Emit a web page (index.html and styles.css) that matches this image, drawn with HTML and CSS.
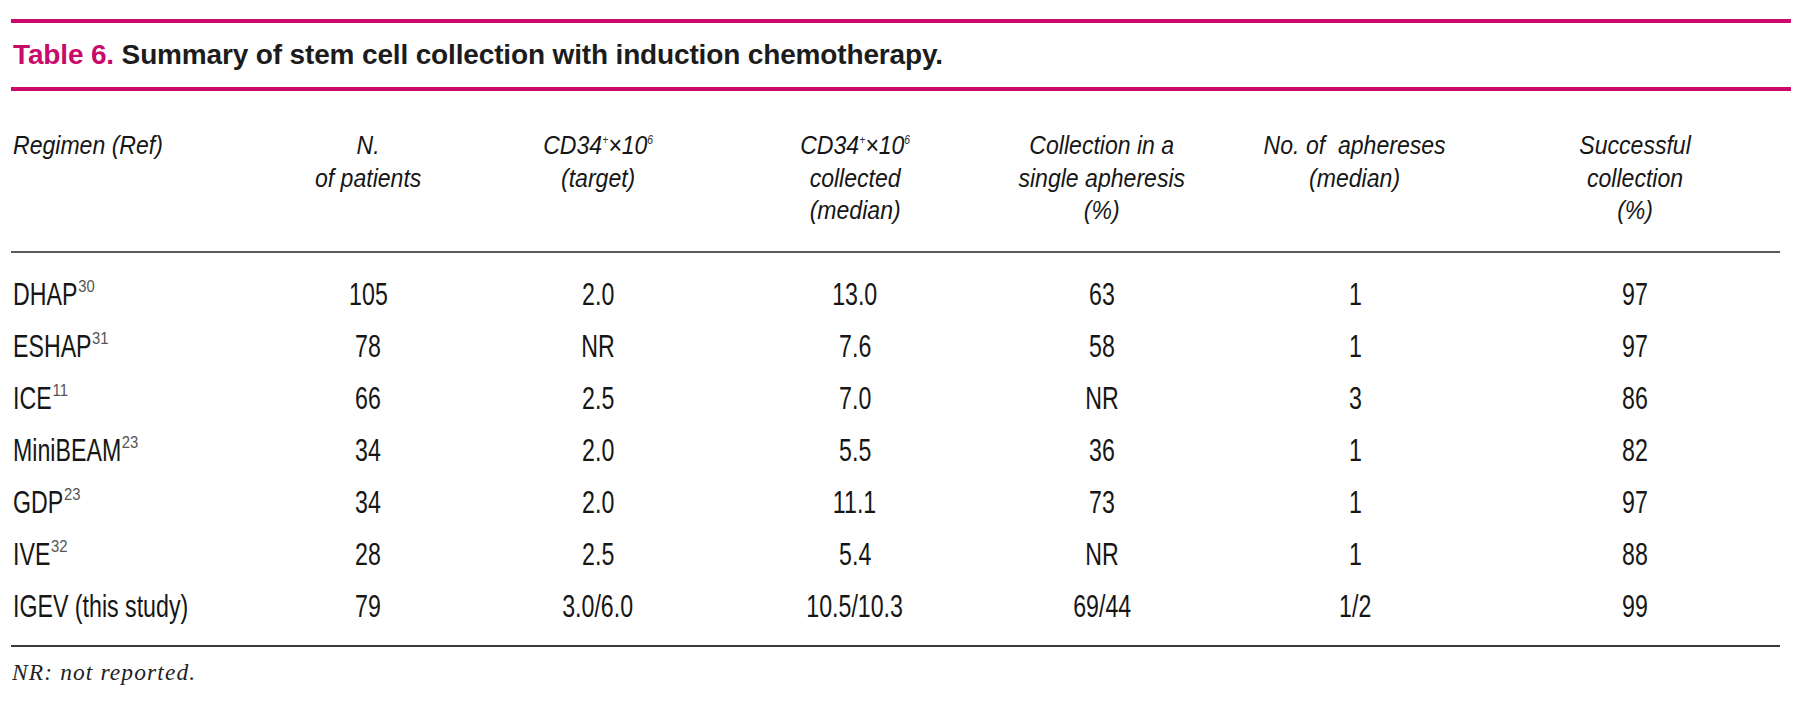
FILE: index.html
```html
<!DOCTYPE html>
<html lang="en">
<head>
<meta charset="utf-8">
<title>Table 6</title>
<link rel="stylesheet" href="styles.css">
</head>
<body>
<div class="page">
  <div class="rule"></div>
  <div class="caption"><span class="label">Table 6.</span> Summary of stem cell collection with induction chemotherapy.</div>
  <div class="rule"></div>
  <table class="data">
    <colgroup>
      <col class="c1"><col class="c2"><col class="c3"><col class="c4"><col class="c5"><col class="c6"><col class="c7"><col>
    </colgroup>
    <thead>
      <tr>
        <th class="left"><span class="t">Regimen (Ref)</span></th>
        <th><span class="t">N.<br>of patients</span></th>
        <th><span class="t">CD34<sup>+</sup>×10<sup>6</sup><br>(target)</span></th>
        <th><span class="t">CD34<sup>+</sup>×10<sup>6</sup><br>collected<br>(median)</span></th>
        <th><span class="t">Collection in a<br>single apheresis<br>(%)</span></th>
        <th><span class="t">No. of &nbsp;aphereses<br>(median)</span></th>
        <th><span class="t">Successful<br>collection<br>(%)</span></th>
        <th></th>
      </tr>
    </thead>
    <tbody>
      <tr class="first"><td class="left"><span class="t">DHAP<sup>30</sup></span></td><td><span class="t">105</span></td><td><span class="t">2.0</span></td><td><span class="t">13.0</span></td><td><span class="t">63</span></td><td><span class="t">1</span></td><td><span class="t">97</span></td><td></td></tr>
      <tr><td class="left"><span class="t">ESHAP<sup>31</sup></span></td><td><span class="t">78</span></td><td><span class="t">NR</span></td><td><span class="t">7.6</span></td><td><span class="t">58</span></td><td><span class="t">1</span></td><td><span class="t">97</span></td><td></td></tr>
      <tr><td class="left"><span class="t">ICE<sup>11</sup></span></td><td><span class="t">66</span></td><td><span class="t">2.5</span></td><td><span class="t">7.0</span></td><td><span class="t">NR</span></td><td><span class="t">3</span></td><td><span class="t">86</span></td><td></td></tr>
      <tr><td class="left"><span class="t">MiniBEAM<sup>23</sup></span></td><td><span class="t">34</span></td><td><span class="t">2.0</span></td><td><span class="t">5.5</span></td><td><span class="t">36</span></td><td><span class="t">1</span></td><td><span class="t">82</span></td><td></td></tr>
      <tr><td class="left"><span class="t">GDP<sup>23</sup></span></td><td><span class="t">34</span></td><td><span class="t">2.0</span></td><td><span class="t">11.1</span></td><td><span class="t">73</span></td><td><span class="t">1</span></td><td><span class="t">97</span></td><td></td></tr>
      <tr><td class="left"><span class="t">IVE<sup>32</sup></span></td><td><span class="t">28</span></td><td><span class="t">2.5</span></td><td><span class="t">5.4</span></td><td><span class="t">NR</span></td><td><span class="t">1</span></td><td><span class="t">88</span></td><td></td></tr>
      <tr class="last"><td class="left"><span class="t">IGEV (this study)</span></td><td><span class="t">79</span></td><td><span class="t">3.0/6.0</span></td><td><span class="t">10.5/10.3</span></td><td><span class="t">69/44</span></td><td><span class="t">1/2</span></td><td><span class="t">99</span></td><td></td></tr>
    </tbody>
  </table>
  <p class="note">NR: not reported.</p>
</div>
</body>
</html>
```
FILE: styles.css
```css
html, body {
  margin: 0;
  padding: 0;
  background: #ffffff;
}

.page {
  padding: 19px 9px 0 11px;
  color: #161616;
}

.rule {
  height: 4px;
  background: #c90a6b;
}

.caption {
  height: 64px;
  display: flex;
  align-items: center;
  padding-left: 2px;
  font-family: "Liberation Sans", Arial, sans-serif;
  font-weight: 700;
  font-size: 28px;
  letter-spacing: -0.15px;
  color: #1c1c1c;
  white-space: pre;
}

.caption .label {
  color: #c90a6b;
}

.data {
  width: 1769px;
  border-collapse: collapse;
  table-layout: fixed;
  font-family: "Liberation Sans", Arial, sans-serif;
  color: #161616;
}

.c1 { width: 242px; }
.c2 { width: 230px; }
.c3 { width: 230px; }
.c4 { width: 284px; }
.c5 { width: 210px; }
.c6 { width: 296px; }
.c7 { width: 264px; }

.data .t {
  display: inline-block;
  white-space: nowrap;
  transform-origin: 50% 0;
}

.data th {
  font-weight: 400;
  font-style: italic;
  font-size: 26.5px;
  line-height: 32.5px;
  text-align: center;
  vertical-align: top;
  padding: 38px 0 24px;
  border-bottom: 2px solid #5a5a5a;
}

.data th .t {
  transform: scaleX(0.87);
}

.data td {
  font-size: 30.5px;
  line-height: 52px;
  text-align: center;
  padding: 0;
}

.data td .t {
  transform: scaleX(0.76);
}

.data .left {
  text-align: left;
  padding-left: 2px;
}

.data .left .t {
  transform-origin: 0 0;
}

.data tr.first td {
  padding-top: 15px;
}

.data tr.last td {
  padding-bottom: 13px;
  border-bottom: 2px solid #3a3a3a;
}

.data td sup {
  display: inline-block;
  font-size: 0.57em;
  line-height: 0;
  vertical-align: 0.74em;
  color: #555555;
  transform: scaleX(1.12);
  transform-origin: 0 50%;
  margin-left: 1px;
}

.data th sup {
  font-size: 0.45em;
  line-height: 0;
  vertical-align: 0.85em;
  color: #333;
}

.note {
  margin: 10px 0 0;
  padding-left: 1px;
  font-family: "Liberation Serif", "Times New Roman", serif;
  font-style: italic;
  font-size: 23.5px;
  line-height: 30px;
  letter-spacing: 1.1px;
  color: #222;
}
```
